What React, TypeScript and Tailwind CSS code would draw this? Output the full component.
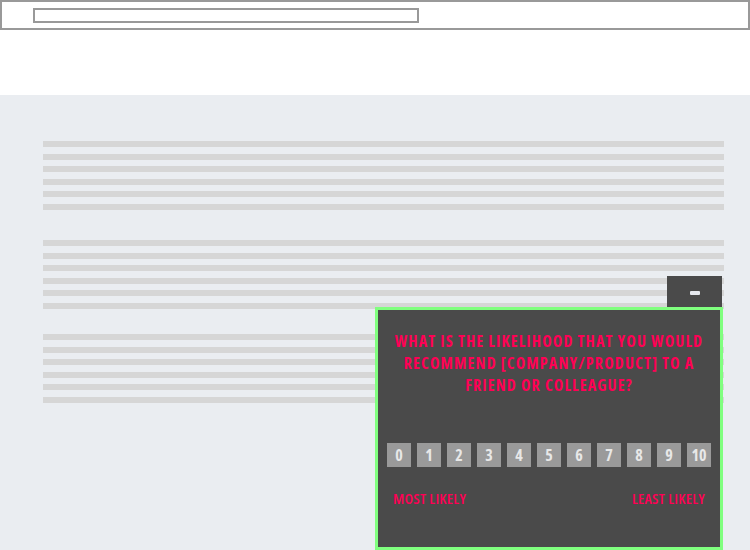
import React from 'react';

const groups = [6, 6, 6];

function LineGroup({ count, className = '' }: { count: number; className?: string }) {
  return (
    <div className={`flex flex-col gap-[6.6px] ${className}`}>
      {Array.from({ length: count }).map((_, i) => (
        <div key={i} className="h-[6px] bg-[#d6d6d6]" />
      ))}
    </div>
  );
}

export default function App() {
  return (
    <div className="w-[750px] h-[550px] bg-white overflow-hidden">
      {/* top bar */}
      <div className="h-[30px] border-2 border-[#999] flex items-center">
        <div className="ml-[31px] w-[386px] h-[15px] border-2 border-[#999]" />
      </div>
      <div className="h-[65px]" />

      {/* content */}
      <div className="relative h-[455px] bg-[#eaedf1] pt-[46px] pl-[43px] pr-[26px]">
        <LineGroup count={groups[0]} />
        <LineGroup count={groups[1]} className="mt-[30px]" />
        <LineGroup count={groups[2]} className="mt-[25px]" />

        {/* minimize button */}
        <div className="absolute right-[28px] top-[181px] w-[55px] h-[31px] bg-[#4a4a4a] flex items-center justify-center pt-[2px]">
          <div className="w-[10px] h-[4px] rounded-[1px] bg-[#e6e8ee]" />
        </div>

        {/* survey widget */}
        <div className="absolute right-[27px] top-[212px] w-[348px] h-[243px] border-[3px] border-[#80ff7f] bg-[#4a4a4a] flex flex-col font-['Open_Sans',sans-serif] [font-stretch:75%]">
          <p className="mt-[20px] px-[12px] text-center text-[16px] leading-[22px] font-bold tracking-[1.15px] text-[#ff0055] uppercase">
            What is the likelihood that you would recommend [company/product] to a friend or colleague?
          </p>
          <div className="mt-[47px] flex justify-center gap-[6px]">
            {Array.from({ length: 11 }).map((_, i) => (
              <div
                key={i}
                className="w-[24px] h-[24px] bg-[#9a9a9a] flex items-center justify-center text-[16px] font-bold text-[#e8e8e8]"
              >
                {i}
              </div>
            ))}
          </div>
          <div className="mt-[22px] px-[15px] flex justify-between text-[15px] leading-[18px] font-semibold tracking-[0.3px] text-[#ff0055] uppercase">
            <span>Most likely</span>
            <span>Least likely</span>
          </div>
        </div>
      </div>
    </div>
  );
}
